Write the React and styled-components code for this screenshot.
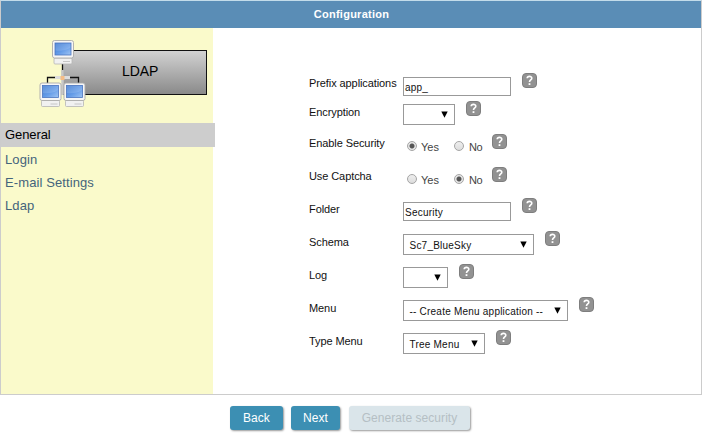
import React from "react";
import styled, { createGlobalStyle } from "styled-components";

const GlobalStyle = createGlobalStyle`
  * { box-sizing: border-box; }
  body { margin: 0; background: #fff; overflow: hidden; font-family: "Liberation Sans", Arial, sans-serif; }
`;

const Page = styled.div`
  width: 702px;
  height: 433px;
`;
const Panel = styled.section`
  height: 395px;
  border: 1px solid #ccc;
  border-top-color: #c3dcea;
  display: flex;
  flex-direction: column;
`;
const Header = styled.header`
  height: 27px;
  flex: none;
  background: #5a8db6;
  color: #fff;
  font-size: 11px;
  font-weight: bold;
  letter-spacing: 0.25px;
  line-height: 27px;
  text-align: center;
  padding-left: 1px;
`;
const Body = styled.div`
  flex: 1;
  display: flex;
`;
const Sidebar = styled.aside`
  width: 212px;
  background: #fafacb;
`;
const Banner = styled.div`
  position: relative;
  height: 95px;
  padding: 22px 0 0 61px;
`;
const BannerBox = styled.div`
  width: 145px;
  height: 45px;
  border: 1px solid #111;
  background: linear-gradient(#d2d2d2, #8a8a8a);
  color: #000;
  font-size: 14px;
  line-height: 41px;
  letter-spacing: -0.1px;
  padding-left: 59px;
`;
const Network = styled.svg`
  position: absolute;
  left: 37px;
  top: 11px;
`;
const NavItem = styled.a`
  display: block;
  width: ${(p) => (p.$active ? "214px" : "auto")};
  height: ${(p) => (p.$active ? "24px" : "23px")};
  margin-bottom: ${(p) => (p.$active ? "1px" : "0")};
  padding-left: 4px;
  line-height: ${(p) => (p.$active ? "24px" : "23px")};
  font-size: 13px;
  letter-spacing: ${(p) => (p.$active ? "-0.1px" : "0.1px")};
  background: ${(p) => (p.$active ? "#cdcdcd" : "transparent")};
  color: ${(p) => (p.$active ? "#000" : "#44647c")};
`;
const Form = styled.form`
  padding: 41px 0 0 96px;
`;
const Row = styled.div`
  display: flex;
  align-items: flex-start;
  height: ${(p) => p.$height}px;
`;
const Label = styled.label`
  width: 94px;
  height: 28px;
  line-height: ${(p) => (p.$height === 29 ? 28 : 32)}px;
  font-size: 11px;
  letter-spacing: -0.09px;
  white-space: nowrap;
  color: #111;
`;
const Field = styled.div`
  margin-top: ${(p) => p.$top}px;
  width: ${(p) => p.$width}px;
  height: ${(p) => (p.$select ? 21 : 19)}px;
  border: 1px solid #999;
  padding: 0 6px 0 ${(p) => (p.$select ? 5.5 : 1)}px;
  display: flex;
  align-items: center;
  justify-content: space-between;
  font-size: 10px;
  letter-spacing: 0.22px;
  white-space: nowrap;
  color: #111;
`;
const Value = styled.span`
  padding-top: 1px;
`;
const Arrow = styled.svg`
  flex: none;
  margin-top: -1px;
`;
const Radios = styled.div`
  width: 78px;
  margin-top: 13px;
  padding-left: 4px;
  display: flex;
`;
const Option = styled.span`
  display: flex;
  align-items: center;
  width: 47px;
  height: 11px;
  flex: none;
  gap: 4px;
  font-size: 11px;
  color: #444;
  span { margin-top: 2px; }
  & + & { width: 27px; letter-spacing: -0.5px; gap: 5px; }
`;
const Dot = styled.i`
  flex: none;
  width: 10px;
  height: 10px;
  border: 1px solid #a5a5a5;
  border-radius: 50%;
  background: ${(p) =>
    p.$on ? "radial-gradient(circle, #555 0 2px, #e6e6e6 3px)" : "linear-gradient(#eee, #ddd)"};
`;
const Help = styled.svg`
  flex: none;
  margin: ${(p) => p.$top}px 0 0 11px;
`;
const Actions = styled.footer`
  display: flex;
  gap: 8px;
  padding: 11px 0 0 230px;
`;
const Button = styled.button`
  width: ${(p) => p.$width}px;
  height: 24px;
  padding: 0;
  border: 0;
  border-radius: 3px;
  background: #3c8fb3;
  color: #fff;
  font: 12px "Liberation Sans", Arial, sans-serif;
  letter-spacing: 0.05px;
  box-shadow: 1px 1px 2px #999;
  &:disabled {
    background: #dae5ea;
    color: #b5bfc4;
    margin-left: 1px;
  }
`;

const rows = [
  { label: "Prefix applications", height: 29, type: "text", value: "app_", width: 108, top: 8, help: 4 },
  { label: "Encryption", height: 29, type: "select", value: "", width: 52, top: 6, help: 3 },
  { label: "Enable Security", height: 33, type: "radio", value: "Yes", help: 7 },
  { label: "Use Captcha", height: 33, type: "radio", value: "No", help: 7 },
  { label: "Folder", height: 33, type: "text", value: "Security", width: 108, top: 9, help: 5 },
  { label: "Schema", height: 33, type: "select", value: "Sc7_BlueSky", width: 131, top: 8, help: 5 },
  { label: "Log", height: 33, type: "select", value: "", width: 45, top: 8, help: 5 },
  { label: "Menu", height: 33, type: "select", value: "-- Create Menu application --", width: 165, top: 8, help: 5 },
  { label: "Type Menu", height: 33, type: "select", value: "Tree Menu", width: 82, top: 8, help: 5 },
];

function Computer({ x, y }) {
  return (
    <g transform={`translate(${x} ${y})`}>
      <rect x="2" y="18" width="18" height="6" rx="1" fill="#f1f1f1" stroke="#b5b5b5" strokeWidth=".8" />
      <path d="M11 21.5h7" stroke="#c6c6c6" />
      <rect x=".5" y=".5" width="21" height="17.5" rx="2" fill="#f6f6f6" stroke="#aaa" strokeWidth=".9" />
      <rect x="3" y="3" width="16" height="12" fill="url(#screen)" stroke="#4b75c0" strokeWidth=".8" />
      <path d="M3.5 3.5h15v4q-6 4-15 3z" fill="#fff" opacity=".15" />
    </g>
  );
}

function NetworkIcon() {
  return (
    <Network width="52" height="70" viewBox="0 0 52 70">
      <defs>
        <linearGradient id="screen" x1="0" y1="0" x2="1" y2="1">
          <stop offset="0" stopColor="#3c79d0" />
          <stop offset=".55" stopColor="#659ce8" />
          <stop offset="1" stopColor="#a0c5f3" />
        </linearGradient>
      </defs>
      <path d="M24.5 25v14M9.500 45v-6.500h31V45" fill="none" stroke="#111" strokeWidth="1.3" />
      <path d="M24.500 31v25" stroke="#c8c8c8" strokeWidth="2.500" />
      <path d="M17 38.500h15" stroke="#ddd" strokeWidth="3" />
      <rect x="22.500" y="37" width="4" height="4" fill="#f5bd86" />
      <Computer x={14} y={1} />
      <Computer x={1.5} y={43.5} />
      <Computer x={25.5} y={43.5} />
    </Network>
  );
}

function HelpIcon({ top }) {
  return (
    <Help $top={top} width="15" height="15" viewBox="0 0 15 15">
      <rect x=".5" y=".5" width="14" height="14" rx="3.5" fill="#929292" stroke="#7e7e7e" />
      <path d="M5.200 5.300C5.300 2.800 9.800 2.800 9.800 5.200C9.800 6.900 7.500 6.900 7.500 9" fill="none" stroke="#fff" strokeWidth="1.6" />
      <rect x="6.600" y="10.200" width="1.800" height="1.800" fill="#fff" />
    </Help>
  );
}

function Control({ row }) {
  if (row.type === "radio") {
    return (
      <Radios>
        {["Yes", "No"].map((name) => (
          <Option key={name}>
            <Dot $on={name === row.value} />
            <span>{name}</span>
          </Option>
        ))}
      </Radios>
    );
  }
  const select = row.type === "select";
  return (
    <Field $select={select} $width={row.width} $top={row.top}>
      <Value>{row.value}</Value>
      {select && (
        <Arrow width="7" height="7" viewBox="0 0 7 7">
          <path d="M.3.5h6.400L3.500 6.700z" fill="#000" />
        </Arrow>
      )}
    </Field>
  );
}

export default function App() {
  return (
    <Page>
      <GlobalStyle />
      <Panel>
        <Header>Configuration</Header>
        <Body>
          <Sidebar>
            <Banner>
              <BannerBox>LDAP</BannerBox>
              <NetworkIcon />
            </Banner>
            <NavItem $active>General</NavItem>
            <NavItem>Login</NavItem>
            <NavItem>E-mail Settings</NavItem>
            <NavItem>Ldap</NavItem>
          </Sidebar>
          <Form>
            {rows.map((row) => (
              <Row key={row.label} $height={row.height}>
                <Label $height={row.height}>{row.label}</Label>
                <Control row={row} />
                <HelpIcon top={row.help} />
              </Row>
            ))}
          </Form>
        </Body>
      </Panel>
      <Actions>
        <Button $width={53}>Back</Button>
        <Button $width={49}>Next</Button>
        <Button $width={121} disabled>Generate security</Button>
      </Actions>
    </Page>
  );
}
